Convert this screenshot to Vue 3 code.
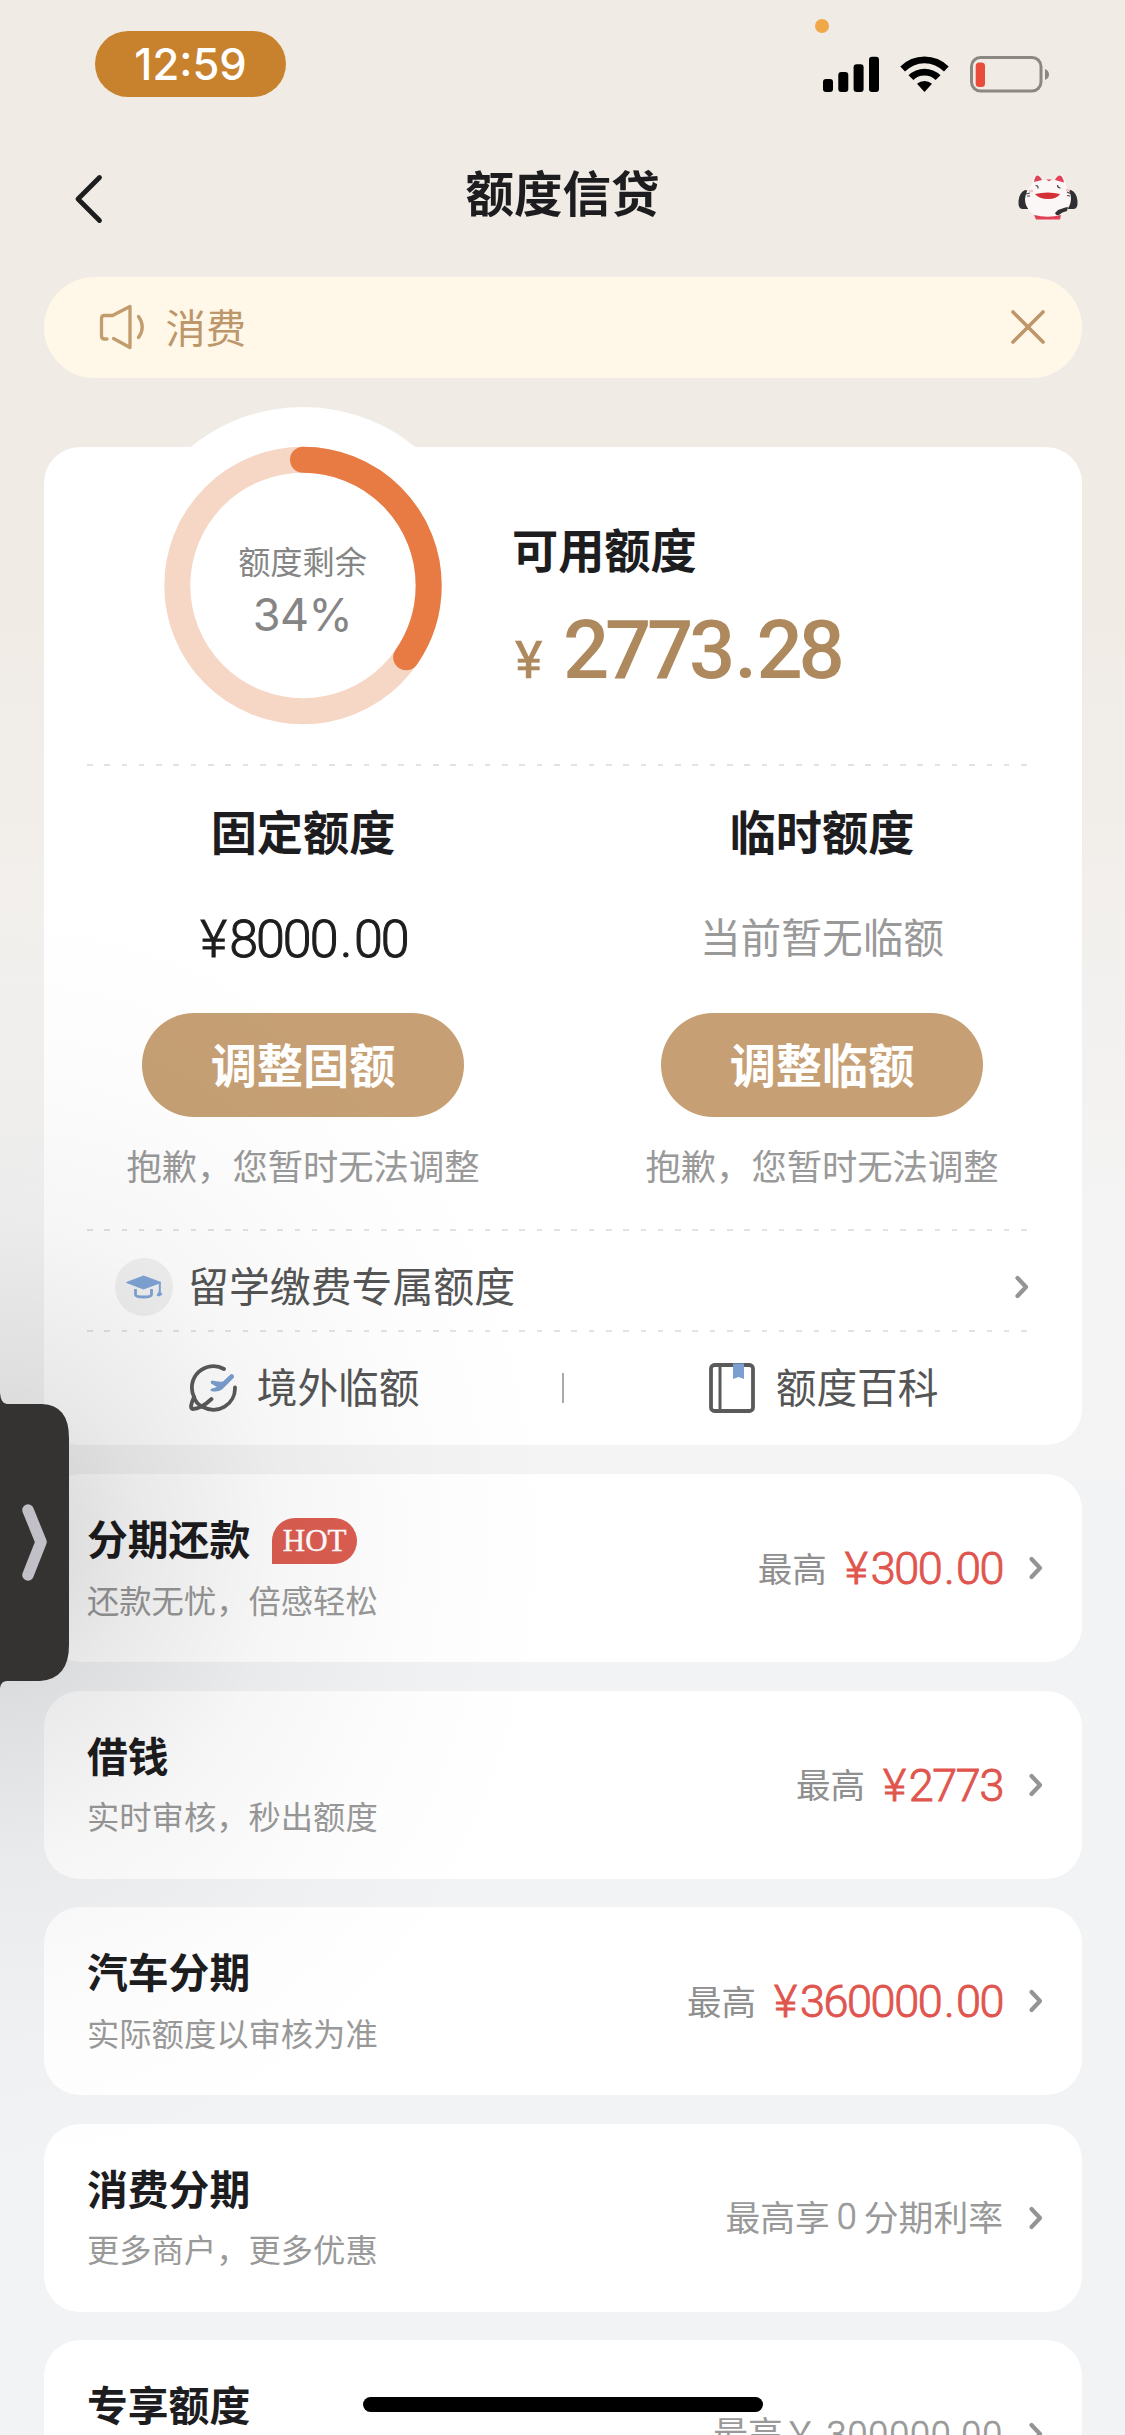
<script setup>
const split = (value) => value.split(/([.¥])/).filter(Boolean)
const glyph = (part) => ({ dot: part === '.', sign: part === '¥' })

const products = [
  { title: '分期还款', hot: true, desc: '还款无忧，倍感轻松', label: '最高', amount: '¥300.00' },
  { title: '借钱', desc: '实时审核，秒出额度', label: '最高', amount: '¥2773' },
  { title: '汽车分期', desc: '实际额度以审核为准', label: '最高', amount: '¥360000.00' },
  { title: '消费分期', desc: '更多商户，更多优惠', note: ['最高享', '0', '分期利率'] },
  { title: '专享额度', desc: '', note: ['最高￥', '300000.00', ''] },
]

const quotas = [
  { title: '固定额度', amount: '¥8000.00', button: '调整固额' },
  { title: '临时额度', empty: '当前暂无临额', button: '调整临额' },
]

const used = 2773.28 / 8000
const circumference = 2 * Math.PI * 125.7
</script>

<template>
  <main class="page">
    <header class="status">
      <span class="clock">12:59</span>
      <span class="privacy-dot"></span>
      <svg class="status-icons" width="230" height="40" viewBox="0 0 230 40">
        <rect x="3" y="25" width="10" height="13" rx="3" />
        <rect x="18.3" y="18" width="10" height="20" rx="3" />
        <rect x="33.6" y="10.3" width="10" height="27.700" rx="3" />
        <rect x="49" y="2.700" width="10" height="35.300" rx="3" />
        <path d="M80.300 12.600A34 34 0 0 1 128.700 12.600L124 17.600A27 27 0 0 0 85 17.600Z" />
        <path d="M88.500 21.200A23 23 0 0 1 120.500 21.200L115.600 26A16 16 0 0 0 93.400 26Z" />
        <path d="M97 29.800A11.500 11.500 0 0 1 112 29.800L104.500 38Z" />
        <rect x="151.500" y="3.500" width="69.500" height="33.500" rx="9" fill="none" stroke="#8b8782" stroke-width="3" />
        <rect x="155.700" y="8.500" width="9.300" height="24.500" rx="3.500" fill="#ea4c3a" />
        <path d="M225 15q4 1.500 4 5.500t-4 5.500z" fill="#8b8782" />
      </svg>
    </header>

    <nav class="nav">
      <svg class="back" width="34" height="54" viewBox="0 0 34 54" fill="none">
        <path d="M29.500 6.500L8 28L29.500 49.500" stroke="#1d1d1f" stroke-width="4.800" stroke-linecap="round" stroke-linejoin="round" />
      </svg>
      <h1>额度信贷</h1>
      <svg class="mascot" width="60" height="48" viewBox="0 0 60 48">
        <path d="M7 16q-6 3-6.500 11t4 8h6l1-18z" fill="#303032" />
        <path d="M53 16q6 3 6.500 11t-4 8h-6l-1-19z" fill="#303032" />
        <path d="M14 10Q15 2 18 1q4-1 7 5h11q4-5 7-5q4 1 5 11q5 7 5 12c0 11-9 20-23 20S7 35 7 25Q8 16 14 10z" fill="#fbf7f6" />
        <path d="M16 8q1-6 3-6.500q3 0 5 4.500z M37 6q2-4.500 5-4.500q3 1 4 7z" fill="#e04157" />
        <path d="M28 5.500h6l-3 1.800z" fill="#e04157" />
        <path d="M17.500 11.500q3 0 2.500 3M39.500 11q0 3 3 3M8 20l4-1M9 22h3M49 18l3 1.500M49 21.500l3 .5" fill="none" stroke="#4a4446" stroke-width="1.200" />
        <path d="M17 20q13-3 25 0q-3 5-12 5t-13-5z" fill="#d32f36" />
        <path d="M11 17h4M48 16h4" stroke="#f5c4cb" stroke-width="2.500" />
        <path d="M16 41q14 3.500 27 0l-1 4.500H18z" fill="#e04157" />
        <path d="M37 39l3-3q8-3 10-3l-1 4q-5 1-8 4q-3 1-4-2z" fill="#303032" />
      </svg>
    </nav>

    <section class="notice">
      <svg width="50" height="48" viewBox="0 0 50 48" fill="none" stroke="#c39c6d" stroke-width="3.300" stroke-linecap="round" stroke-linejoin="round">
        <path d="M9 36H6.500Q3.500 36 3.500 33V15.500Q3.500 12.500 6.500 12.500H14.500L32 3.500V44.500L15.500 35.500" />
        <path d="M40.500 13.500Q48 24 40.500 34.500" />
      </svg>
      <span>消费</span>
      <svg class="close" width="36" height="36" viewBox="0 0 36 36" fill="none" stroke="#bd966a" stroke-width="3.600" stroke-linecap="round">
        <path d="M3 3L33 33M33 3L3 33" />
      </svg>
    </section>

    <section class="card">
      <div class="summary">
        <div class="gauge">
          <svg width="356" height="356" viewBox="0 0 356 356" fill="none" stroke-width="26">
            <circle cx="178" cy="178.500" r="125.700" stroke="#f6d6c4" />
            <circle cx="178" cy="178.500" r="125.700" stroke="#e77b43" stroke-linecap="round" transform="rotate(-90 178 178.500)" :stroke-dasharray="`${circumference * used} ${circumference}`" />
          </svg>
          <div class="gauge-text">
            <span class="gauge-label">额度剩余</span>
            <span class="gauge-value">34%</span>
          </div>
        </div>
        <div class="available">
          <h2>可用额度</h2>
          <p><span class="yen">¥</span><span class="big"><span v-for="(p, i) in split('2773.28')" :key="i" :class="glyph(p)">{{ p }}</span></span></p>
        </div>
      </div>

      <div class="dash"></div>

      <div class="quotas">
        <div v-for="q in quotas" :key="q.title" class="quota">
          <h2>{{ q.title }}</h2>
          <p v-if="q.amount" class="amount"><span v-for="(p, i) in split(q.amount)" :key="i" :class="glyph(p)">{{ p }}</span></p>
          <p v-else class="empty">{{ q.empty }}</p>
          <button>{{ q.button }}</button>
          <p class="hint">抱歉，您暂时无法调整</p>
        </div>
      </div>

      <div class="dash"></div>

      <div class="study">
        <svg width="58" height="58" viewBox="0 0 58 58">
          <circle cx="29" cy="29" r="29" fill="#f1f1f2" />
          <path d="M11.500 24.500L28.500 18L46 24.500L28.500 31Z" fill="#7fa4d6" stroke="#7fa4d6" stroke-linejoin="round" />
          <path d="M20.500 31v5.500q0 2.500 8 2.500t8-2.500V31" fill="none" stroke="#7fa4d6" stroke-width="2.800" />
          <path d="M44.800 24.500v9" stroke="#7fa4d6" stroke-width="2" />
          <path d="M44.500 32l3 4.500-3.500 2-2.500-1z" fill="#7fa4d6" />
        </svg>
        <span>留学缴费专属额度</span>
        <svg class="chev" width="16" height="26" viewBox="0 0 16 26"><path d="M3.500 4L12 13L3.500 22" /></svg>
      </div>

      <div class="dash"></div>

      <div class="links">
        <div class="link">
          <svg class="globe" width="50" height="50" viewBox="0 0 50 50" fill="none">
            <path d="M35 6A21.500 21.500 0 0 0 5 34M14 44A21.500 21.500 0 0 0 46 24.500" stroke="#5a5a5a" stroke-width="3.800" stroke-linecap="round" />
            <path d="M5 34Q0 45 3.500 46Q12 46 22.500 36M5 34Q7 41 14 44" stroke="#5a5a5a" stroke-width="3.800" stroke-linecap="round" />
            <path d="M42 11q3.500 0 3 3.500L33 26.500q-4 3-11 1.500q-1.500-1.500 1-2.500l5-1.500-6-3.500q-1-2 1-3q6 1.500 11 1z" fill="#7a9fd0" />
          </svg>
          <span>境外临额</span>
        </div>
        <i class="divider"></i>
        <div class="link">
          <svg width="50" height="50" viewBox="0 0 50 50" fill="none">
            <rect x="4" y="2" width="42" height="46" rx="3.500" stroke="#5a5a5a" stroke-width="3.800" />
            <path d="M13 2v46" stroke="#5a5a5a" stroke-width="3" />
            <path d="M26 .5h11v15.500l-5.500-2-5.500 2z" fill="#7a9fd0" />
          </svg>
          <span>额度百科</span>
        </div>
      </div>
    </section>

    <section v-for="p in products" :key="p.title" class="item">
      <div class="info">
        <div class="title"><h3>{{ p.title }}</h3><b v-if="p.hot" class="hot">HOT</b></div>
        <p>{{ p.desc }}</p>
      </div>
      <div v-if="p.amount" class="value">
        <span class="label">{{ p.label }}</span>
        <span class="price"><span v-for="(s, i) in split(p.amount)" :key="i" :class="glyph(s)">{{ s }}</span></span>
      </div>
      <div v-else class="value note">
        <span>{{ p.note[0] }}</span><span class="num" :class="{ long: p.note[1].length > 1 }">{{ p.note[1] }}</span><span>{{ p.note[2] }}</span>
      </div>
      <svg class="chev" width="16" height="26" viewBox="0 0 16 26"><path d="M3.500 4L12 13L3.500 22" /></svg>
    </section>

    <div class="shade"></div>
    <svg class="drawer" width="70" height="300" viewBox="0 0 70 300">
      <path d="M0 0Q1 11 7 11H42Q69 12 69 45V252Q69 286 40 288H7Q1 288 0 295Z" fill="#343331" />
      <path d="M28 117L41 149L28 182" fill="none" stroke="#c1c0c7" stroke-width="11.500" stroke-linecap="round" stroke-linejoin="round" />
    </svg>
    <div class="home-bar"></div>
  </main>
</template>

<style>
body { margin: 0; }
</style>

<style scoped>
* { box-sizing: border-box; }
h1, h2, h3, p { margin: 0; font-weight: 700; }
svg { display: block; flex: none; }

.page {
  position: relative;
  width: 1125px;
  height: 2435px;
  overflow: hidden;
  display: flex;
  flex-direction: column;
  padding: 0 43.5px 0 43.5px;
  font-family: "Noto Sans CJK SC", sans-serif;
  color: #1d1d1f;
  background: linear-gradient(#f0ebe5 0, #f0ebe5 600px, #f4f4f4 1220px, #f4f4f4 1460px, #f2f3f5 1500px);
}

.status {
  position: relative;
  flex: none;
  display: flex;
  align-items: flex-start;
  justify-content: space-between;
  height: 130px;
  padding: 31px 31.5px 0 51.5px;
}
.clock {
  width: 191px;
  height: 66px;
  border-radius: 33px;
  background: #c8822d;
  color: #fff;
  font: 500 43.5px/66px Inter, sans-serif;
  text-align: center;
}
.privacy-dot {
  position: absolute;
  left: 771.5px;
  top: 19px;
  width: 14px;
  height: 14px;
  border-radius: 50%;
  background: #f0a848;
}
.status-icons { margin-top: 23px; }

.nav {
  flex: none;
  display: flex;
  align-items: center;
  justify-content: space-between;
  height: 146.5px;
  padding: 0 3px 10px 26px;
}
.nav h1 { font-size: 48.5px; line-height: 70px; margin-top: -15px; }
.nav .back { margin-right: 3px; }

.notice {
  flex: none;
  display: flex;
  align-items: center;
  height: 101.5px;
  padding: 0 35.5px 0 54px;
  border-radius: 51px;
  background: #fff7e8;
  color: #bd966a;
}
.notice span { margin-left: 18px; font-size: 40.3px; line-height: 56px; margin-top: -3px; }
.notice .close { margin-left: auto; }

.card {
  flex: none;
  display: flex;
  flex-direction: column;
  height: 998px;
  margin-top: 69px;
  border-radius: 36px;
  background: #fff;
}
.summary { display: flex; flex: none; height: 317px; padding-left: 81.5px; }
.gauge {
  position: relative;
  flex: none;
  width: 356px;
  height: 356px;
  margin-top: -40px;
  border-radius: 50%;
  background: #fff;
}
.gauge-text {
  position: absolute;
  inset: 129px 1px auto 0;
  display: flex;
  flex-direction: column;
  align-items: center;
  color: #858585;
}
.gauge-label { font-size: 32.2px; line-height: 48px; }
.gauge-value { font: 400 45px/54px Inter, sans-serif; letter-spacing: -0.5px; margin-top: 4px; }
.available { margin: 73px 0 0 31px; }
.available h2 { font-size: 46.2px; line-height: 56px; }
.available p { display: flex; align-items: baseline; margin-top: 29px; line-height: 90px; color: #ae895e; }
.available .yen { width: 51px; padding-left: 3px; font: 400 52px/90px Roboto, sans-serif; -webkit-text-stroke: .6px; }
.big { font: 500 81.5px/90px Roboto, sans-serif; letter-spacing: -4.3px; }
.big .dot { margin: 0 3.5px; }

.dash {
  flex: none;
  height: 2px;
  margin: 0 53px 0 43.5px;
  background: repeating-linear-gradient(90deg, #e3e3e3 0 5.500px, transparent 5.500px 17.300px);
}

.quotas { flex: none; display: flex; height: 463px; }
.quota { flex: 1; display: flex; flex-direction: column; align-items: center; padding-top: 34px; }
.quota h2 { font-size: 46.2px; line-height: 60px; }
.quota .amount { margin: 50px -2px 0 0; font: 300 52px/60px Roboto, sans-serif; letter-spacing: -2px; -webkit-text-stroke: 1px; margin-bottom: -2px; }
.quota .amount .dot { margin: 0 3.5px; }
.quota .amount .sign { margin-right: 4px; }
.quota .empty { margin-top: 46px; font-size: 40.7px; line-height: 60px; margin-bottom: 2px; color: #999; font-weight: 400; }
.quota button {
  flex: none;
  width: 322px;
  height: 104px;
  margin-top: 44.5px;
  padding: 0 0 3px;
  border: 0;
  border-radius: 52px;
  background: #c6a074;
  color: #fff;
  font: 700 46.2px/60px "Noto Sans CJK SC", sans-serif;
}
.quota .hint { margin-top: 24px; font-size: 35.3px; line-height: 48px; color: #999; font-weight: 400; }

.study {
  flex: none;
  display: flex;
  align-items: center;
  height: 99px;
  padding: 12px 52px 0 71.5px;
  color: #555;
}
.study span { margin-left: 15px; font-size: 40.9px; line-height: 56px; margin-top: -3px; }
.study .chev { margin-left: auto; }
.chev path { fill: none; stroke: #949494; stroke-width: 4.2px; stroke-linecap: round; stroke-linejoin: round; }

.links { flex: 1; display: flex; align-items: center; color: #555; padding: 0 0 2px 1px; }
.link { flex: 1; display: flex; align-items: center; justify-content: center; gap: 19px; font-size: 40.7px; line-height: 56px; }
.link span { margin-top: -3px; }
.globe { margin: 0 -1.5px 0 2px; }
.divider { width: 1.500px; height: 30px; background: #aaa; }

.item {
  flex: none;
  display: flex;
  align-items: center;
  height: 188px;
  margin-top: 28.5px;
  padding: 0 37.5px 0 43.5px;
  border-radius: 36px;
  background: #fff;
}
.card + .item { margin-top: 29px; }
.info { flex: 1; align-self: flex-start; padding-top: 36px; }
.title { display: flex; align-items: center; height: 56px; }
.title h3 { font-size: 40.8px; line-height: 56px; }
.hot {
  width: 85px;
  height: 46px;
  margin: 5px 0 0 22px;
  border-radius: 23px 23px 23px 0;
  background: #dc5d51;
  color: #fff;
  font: 400 31px/45px "Liberation Serif", serif;
  -webkit-text-stroke: .4px;
  text-align: center;
}
.info p { margin-top: 8.5px; font-size: 32.3px; line-height: 48px; color: #999; font-weight: 400; }
.value { display: flex; align-items: center; margin-right: 25px; }
.label { font-size: 34.5px; line-height: 50px; margin: -3px 18px 0 0; color: #8f8f8f; font-weight: 400; }
.price { font: 300 45px/60px Roboto, sans-serif; letter-spacing: -1.4px; color: #e0554e; -webkit-text-stroke: .9px; margin-top: 2px; }
.price .dot { margin: 0 2.6px; }
.price .sign { margin-right: 4px; }
.note { font-size: 34.8px; line-height: 50px; color: #999; margin-top: -4px; }
.note .num { font: 300 36px/50px Roboto, sans-serif; padding: 3px 7px 0; -webkit-text-stroke: .7px; }
.note .num.long { padding: 5px 0 0 9px; letter-spacing: .9px; }

.shade {
  position: absolute;
  left: 0;
  top: 900px;
  width: 560px;
  height: 1290px;
  pointer-events: none;
  background: radial-gradient(ellipse 560px 640px at 0 640px, rgba(0, 0, 0, .17) 0, rgba(0, 0, 0, .085) 25%, rgba(0, 0, 0, .036) 50%, rgba(0, 0, 0, .011) 75%, transparent 100%);
}
.drawer { position: absolute; left: 0; top: 1393px; }
.home-bar {
  position: absolute;
  left: 363px;
  top: 2397px;
  width: 400px;
  height: 15px;
  border-radius: 8px;
  background: #000;
}
</style>
